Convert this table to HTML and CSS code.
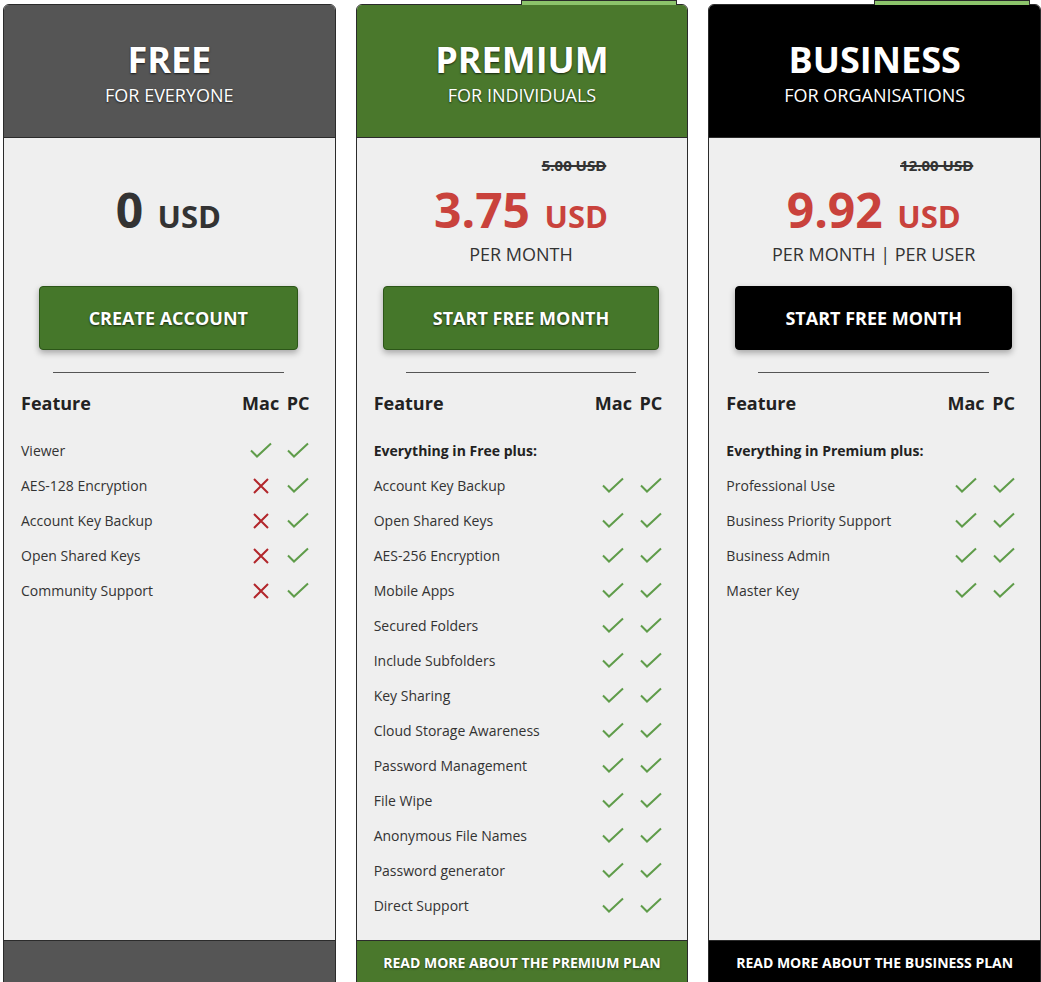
FILE: index.html
```html
<!DOCTYPE html>
<html>
<head>
<meta charset="utf-8">
<link rel="stylesheet" href="styles.css">
</head>
<body>
<svg width="0" height="0" class="defs">
  <defs>
    <symbol id="chk" viewBox="0 0 22 17"><polyline points="1,8.5 7,14.5 21,1.5" fill="none" stroke="#5f9c4a" stroke-width="2"/></symbol>
    <symbol id="crs" viewBox="0 0 18 18"><path d="M2 2 L16 16 M16 2 L2 16" fill="none" stroke="#b2262b" stroke-width="2"/></symbol>
  </defs>
</svg>
<div class="plans">
  <div class="plan plan-free">
    <div class="head"><div class="title">FREE</div><div class="sub">FOR EVERYONE</div></div>
    <div class="body">
      <div class="old">&nbsp;</div>
      <div class="price dark">0 <span class="cur">USD</span></div>
      <div class="per">&nbsp;</div>
      <div class="btn-wrap"><a class="btn">CREATE ACCOUNT</a></div>
      <div class="rule"></div>
      <div class="grid">
        <div class="gh">Feature</div><div class="gh c">Mac</div><div class="gh c">PC</div>
      </div>
      <div class="rows">
        <div class="row"><span>Viewer</span><svg class="ic"><use href="#chk"/></svg><svg class="ic"><use href="#chk"/></svg></div>
        <div class="row"><span>AES-128 Encryption</span><svg class="ix"><use href="#crs"/></svg><svg class="ic"><use href="#chk"/></svg></div>
        <div class="row"><span>Account Key Backup</span><svg class="ix"><use href="#crs"/></svg><svg class="ic"><use href="#chk"/></svg></div>
        <div class="row"><span>Open Shared Keys</span><svg class="ix"><use href="#crs"/></svg><svg class="ic"><use href="#chk"/></svg></div>
        <div class="row"><span>Community Support</span><svg class="ix"><use href="#crs"/></svg><svg class="ic"><use href="#chk"/></svg></div>
      </div>
    </div>
    <div class="foot">&nbsp;</div>
  </div>

  <div class="plan plan-premium">
    <div class="tab"></div>
    <div class="head"><div class="title">PREMIUM</div><div class="sub">FOR INDIVIDUALS</div></div>
    <div class="body">
      <div class="old"><s>5.00 USD</s></div>
      <div class="price">3.75 <span class="cur">USD</span></div>
      <div class="per">PER MONTH</div>
      <div class="btn-wrap"><a class="btn">START FREE MONTH</a></div>
      <div class="rule"></div>
      <div class="grid">
        <div class="gh">Feature</div><div class="gh c">Mac</div><div class="gh c">PC</div>
      </div>
      <div class="rows">
        <div class="row"><b>Everything in Free plus:</b></div>
        <div class="row"><span>Account Key Backup</span><svg class="ic"><use href="#chk"/></svg><svg class="ic"><use href="#chk"/></svg></div>
        <div class="row"><span>Open Shared Keys</span><svg class="ic"><use href="#chk"/></svg><svg class="ic"><use href="#chk"/></svg></div>
        <div class="row"><span>AES-256 Encryption</span><svg class="ic"><use href="#chk"/></svg><svg class="ic"><use href="#chk"/></svg></div>
        <div class="row"><span>Mobile Apps</span><svg class="ic"><use href="#chk"/></svg><svg class="ic"><use href="#chk"/></svg></div>
        <div class="row"><span>Secured Folders</span><svg class="ic"><use href="#chk"/></svg><svg class="ic"><use href="#chk"/></svg></div>
        <div class="row"><span>Include Subfolders</span><svg class="ic"><use href="#chk"/></svg><svg class="ic"><use href="#chk"/></svg></div>
        <div class="row"><span>Key Sharing</span><svg class="ic"><use href="#chk"/></svg><svg class="ic"><use href="#chk"/></svg></div>
        <div class="row"><span>Cloud Storage Awareness</span><svg class="ic"><use href="#chk"/></svg><svg class="ic"><use href="#chk"/></svg></div>
        <div class="row"><span>Password Management</span><svg class="ic"><use href="#chk"/></svg><svg class="ic"><use href="#chk"/></svg></div>
        <div class="row"><span>File Wipe</span><svg class="ic"><use href="#chk"/></svg><svg class="ic"><use href="#chk"/></svg></div>
        <div class="row"><span>Anonymous File Names</span><svg class="ic"><use href="#chk"/></svg><svg class="ic"><use href="#chk"/></svg></div>
        <div class="row"><span>Password generator</span><svg class="ic"><use href="#chk"/></svg><svg class="ic"><use href="#chk"/></svg></div>
        <div class="row"><span>Direct Support</span><svg class="ic"><use href="#chk"/></svg><svg class="ic"><use href="#chk"/></svg></div>
      </div>
    </div>
    <div class="foot">READ MORE ABOUT THE PREMIUM PLAN</div>
  </div>

  <div class="plan plan-business">
    <div class="tab"></div>
    <div class="head"><div class="title">BUSINESS</div><div class="sub">FOR ORGANISATIONS</div></div>
    <div class="body">
      <div class="old"><s>12.00 USD</s></div>
      <div class="price">9.92 <span class="cur">USD</span></div>
      <div class="per">PER MONTH | PER USER</div>
      <div class="btn-wrap"><a class="btn">START FREE MONTH</a></div>
      <div class="rule"></div>
      <div class="grid">
        <div class="gh">Feature</div><div class="gh c">Mac</div><div class="gh c">PC</div>
      </div>
      <div class="rows">
        <div class="row"><b>Everything in Premium plus:</b></div>
        <div class="row"><span>Professional Use</span><svg class="ic"><use href="#chk"/></svg><svg class="ic"><use href="#chk"/></svg></div>
        <div class="row"><span>Business Priority Support</span><svg class="ic"><use href="#chk"/></svg><svg class="ic"><use href="#chk"/></svg></div>
        <div class="row"><span>Business Admin</span><svg class="ic"><use href="#chk"/></svg><svg class="ic"><use href="#chk"/></svg></div>
        <div class="row"><span>Master Key</span><svg class="ic"><use href="#chk"/></svg><svg class="ic"><use href="#chk"/></svg></div>
      </div>
    </div>
    <div class="foot">READ MORE ABOUT THE BUSINESS PLAN</div>
  </div>
</div>
</body>
</html>
```

FILE: styles.css
```css
html, body {
  margin: 0;
  padding: 0;
  background: #ffffff;
}
body {
  font-family: "Open Sans", "DejaVu Sans", sans-serif;
  color: #333;
  overflow: hidden;
}
.defs {
  position: absolute;
  width: 0;
  height: 0;
}
.plans {
  display: flex;
  gap: 20px;
  padding: 4px 0 0 3px;
  align-items: stretch;
}
.plan {
  position: relative;
  width: 333px;
  box-sizing: border-box;
  border: 1px solid #2b2b2b;
  border-radius: 6px 6px 0 0;
  display: flex;
  flex-direction: column;
  background: #efefef;
}
.tab {
  position: absolute;
  top: -5px;
  right: 10px;
  width: 154px;
  height: 4px;
  background: #8cc46b;
  border: 1px solid #2b2b2b;
  border-bottom: none;
}
.head {
  height: 133px;
  border-bottom: 1px solid #2b2b2b;
  border-radius: 5px 5px 0 0;
  color: #fff;
  text-align: center;
  box-sizing: border-box;
  padding-top: 33px;
}
.plan-free .head, .plan-free .foot { background: #555555; }
.plan-premium .head, .plan-premium .foot { background: #4a782c; }
.plan-business .head, .plan-business .foot { background: #000000; }
.title {
  font-size: 36px;
  font-weight: 700;
  line-height: 44px;
  text-shadow: 0 1px 2px rgba(0,0,0,0.7);
}
.sub {
  font-size: 18px;
  line-height: 24px;
  margin-top: 1px;
  text-shadow: 0 1px 2px rgba(0,0,0,0.6);
}
.body {
  flex: 1;
  padding: 16px 19px 17px 17px;
  background: #efefef;
}
.old {
  font-size: 15px;
  font-weight: 700;
  line-height: 22px;
  text-align: center;
  padding-left: 106px;
  color: #333;
}
.plan-business .old { padding-left: 126px; }
.old s { text-decoration-thickness: 1.5px; }
.price {
  font-size: 48px;
  font-weight: 700;
  line-height: 60px;
  margin-top: 4px;
  color: #c9423c;
  text-align: center;
}
.price.dark { color: #333; }
.cur {
  font-size: 31px;
  margin-left: 2px;
}
.per {
  font-size: 18px;
  line-height: 20px;
  margin-top: -2px;
  text-align: center;
  color: #333;
}
.btn-wrap {
  margin-top: 22px;
  text-align: center;
}
.btn {
  display: inline-block;
  height: 64px;
  line-height: 62px;
  box-sizing: border-box;
  padding: 0 49px;
  font-size: 18px;
  font-weight: 700;
  color: #fff;
  border-radius: 4px;
  background: #45772a;
  border: 1px solid #2c5618;
  box-shadow: 0 3px 6px rgba(0,0,0,0.3);
  text-shadow: 0 1px 2px rgba(0,0,0,0.7);
}
.plan-business .btn {
  background: #000;
  border-color: #000;
}
.rule {
  height: 1px;
  background: #555;
  margin: 22px 32px 0 32px;
}
.grid {
  display: grid;
  grid-template-columns: 1fr 40px 35px;
  margin-top: 17px;
}
.gh {
  font-size: 18px;
  font-weight: 700;
  line-height: 26px;
  color: #222;
}
.gh.c { text-align: center; }
.rows {
  margin-top: 17px;
}
.row {
  display: grid;
  grid-template-columns: 1fr 40px 35px;
  align-items: center;
  height: 35px;
  font-size: 14px;
  color: #333;
}
.row b {
  font-weight: 700;
  color: #222;
}
.row svg {
  justify-self: center;
}
.ic {
  width: 22px;
  height: 17px;
}
.ix {
  width: 18px;
  height: 18px;
}
.foot {
  height: 44px;
  line-height: 44px;
  text-align: center;
  color: #fff;
  font-size: 14px;
  font-weight: 700;
  border-top: 1px solid #2b2b2b;
  text-shadow: 0 1px 2px rgba(0,0,0,0.5);
}
```
